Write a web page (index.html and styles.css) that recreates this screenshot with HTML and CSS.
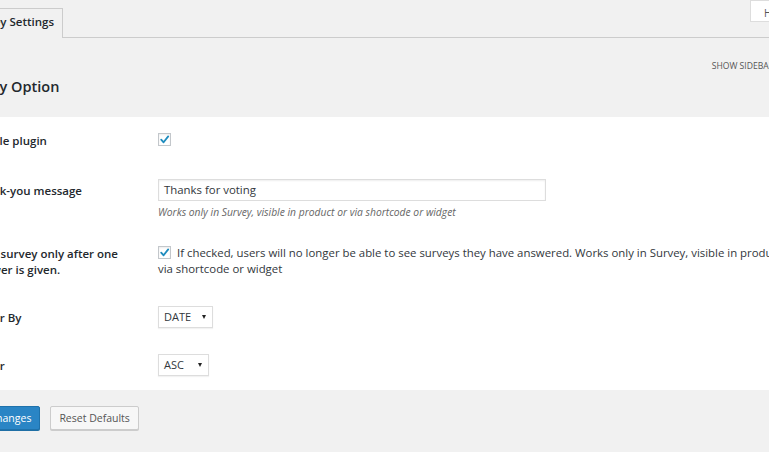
FILE: index.html
```html
<!DOCTYPE html>
<html lang="en">
<head>
<meta charset="utf-8">
<title>Survey Settings</title>
<link rel="stylesheet" href="styles.css">
</head>
<body>
<div class="screen">
  <a class="help-tab">Help <span class="caret">&#9662;</span></a>
  <div class="wrap">
    <nav class="nav-tabs">
      <span class="nav-tab active">Survey Settings</span>
    </nav>
    <div class="section-head">
      <div class="sidebar-toggle">SHOW SIDEBAR</div>
      <h2 class="section-title">Survey Option</h2>
    </div>
    <div class="panel">
      <div class="form-table">
        <div class="th">Enable plugin</div>
        <div class="td td-check">
          <span class="checkbox"><svg viewBox="0 0 13 13" width="13" height="13"><path d="M3.2 6.6 L5.6 9.3 L10.2 3.4" fill="none" stroke="#1e8cbe" stroke-width="1.8" stroke-linecap="round" stroke-linejoin="round"/></svg></span>
        </div>

        <div class="th">Thank-you message</div>
        <div class="td">
          <div class="text-input">Thanks for voting</div>
          <p class="description">Works only in Survey, visible in product or via shortcode or widget</p>
        </div>

        <div class="th">Hide survey only after one answer is given.</div>
        <div class="td td-check">
          <p class="check-text"><span class="checkbox inline"><svg viewBox="0 0 13 13" width="13" height="13"><path d="M3.2 6.6 L5.6 9.3 L10.2 3.4" fill="none" stroke="#1e8cbe" stroke-width="1.8" stroke-linecap="round" stroke-linejoin="round"/></svg></span>If checked, users will no longer be able to see surveys they have answered. Works only in Survey, visible in product or via shortcode or widget</p>
        </div>

        <div class="th">Order By</div>
        <div class="td">
          <div class="select select-date"><span>DATE</span><span class="arrow"></span></div>
        </div>

        <div class="th">Order</div>
        <div class="td">
          <div class="select select-asc"><span>ASC</span><span class="arrow"></span></div>
        </div>
      </div>
    </div>
    <div class="submit">
      <button class="button button-primary">Save Changes</button>
      <button class="button">Reset Defaults</button>
    </div>
  </div>
</div>
</body>
</html>
```

FILE: styles.css
```css
html, body {
  margin: 0;
  padding: 0;
  overflow: hidden;
}
body {
  background: #f1f1f1;
  font-family: "Open Sans", "Noto Sans", "Liberation Sans", sans-serif;
  color: #23282d;
  width: 769px;
  height: 452px;
}
.screen {
  position: relative;
  width: 769px;
  height: 452px;
}
.help-tab {
  position: absolute;
  top: -8px;
  left: 750px;
  z-index: 2;
  background: #fff;
  border: 1px solid #ddd;
  padding: 5px 10px 0 13px;
  height: 15px;
  font-size: 10px;
  line-height: 15px;
  color: #555;
  white-space: nowrap;
}
.help-tab .caret { font-size: 8px; }
.wrap {
  margin-left: -42px;
  margin-right: -50px;
}
.nav-tabs {
  display: flex;
  margin-top: 8px;
  padding-left: 1px;
  border-bottom: 1px solid #ccc;
}
.nav-tab {
  border: 1px solid #ccc;
  border-bottom: none;
  background: #f1f1f1;
  margin-bottom: -1px;
  padding: 5px 8px 8px 9px;
  font-size: 11.5px;
  line-height: 16px;
  font-weight: 600;
  color: #23282d;
}
.section-head {
  padding: 22px 45px 21px 2px;
}
.sidebar-toggle {
  text-align: right;
  font-size: 8.6px;
  line-height: 12px;
  color: #555;
}
.section-title {
  margin: 6px 0 0 0;
  font-size: 14.5px;
  line-height: 18px;
  font-weight: 600;
  color: #23282d;
}
.panel {
  background: #fff;
  padding-left: 14px;
}
.form-table {
  display: grid;
  grid-template-columns: 178px 1fr;
}
.th {
  padding: 16px 10px 16px 0;
  font-size: 11.5px;
  line-height: 16px;
  font-weight: 600;
  color: #23282d;
}
.td {
  padding: 12px 9px 11px 8px;
  font-size: 11.5px;
  line-height: 16px;
  color: #32373c;
}
.td-check {
  padding-top: 16px;
  padding-bottom: 16px;
}
.checkbox {
  display: block;
  width: 13px;
  height: 13px;
  box-sizing: border-box;
  border: 1px solid #c3c7cb;
  box-shadow: inset 0 1px 2px rgba(0,0,0,.08);
  background: #fff;
  position: relative;
  margin-bottom: 5px;
}
.checkbox svg {
  position: absolute;
  left: -1px;
  top: -1px;
}
.checkbox.inline {
  display: inline-block;
  vertical-align: -2px;
  margin: 0 6px 0 0;
}
.check-text {
  margin: 0;
  position: relative;
  top: -1px;
  font-size: 11.4px;
}
.text-input {
  width: 388px;
  height: 22px;
  box-sizing: border-box;
  border: 1px solid #ddd;
  box-shadow: inset 0 1px 2px rgba(0,0,0,.07);
  padding: 0 5px;
  font-size: 11.4px;
  line-height: 20px;
  color: #32373c;
}
.description {
  margin: 4px 0 0 0;
  font-size: 10.3px;
  line-height: 14px;
  font-style: italic;
  color: #666;
}
.select {
  display: flex;
  align-items: center;
  justify-content: space-between;
  height: 22px;
  box-sizing: border-box;
  border: 1px solid #ddd;
  box-shadow: 0 1px 1px rgba(0,0,0,.05);
  padding: 0 6px 0 5px;
  font-size: 11px;
  color: #32373c;
  background: #fff;
}
.select-date { width: 55px; }
.select-asc { width: 51px; }
.select .arrow {
  width: 0;
  height: 0;
  border-left: 2.5px solid transparent;
  border-right: 2.5px solid transparent;
  border-top: 4px solid #222;
}
.submit {
  display: flex;
  gap: 10px;
  padding: 16px 0 0 0;
  margin-left: -4px;
}
.button {
  font-family: inherit;
  height: 24px;
  box-sizing: border-box;
  padding: 0 8px;
  font-size: 10.5px;
  line-height: 22px;
  border-radius: 2px;
  border: 1px solid #ccc;
  background: #f7f7f7;
  color: #555;
  box-shadow: 0 1px 0 #ccc;
  cursor: pointer;
}
.button-primary {
  background: #2a85c5;
  border-color: #1f72ab;
  color: #fff;
  box-shadow: 0 1px 0 #1f6fa5;
  padding: 0 8px 0 9px;
}
```
